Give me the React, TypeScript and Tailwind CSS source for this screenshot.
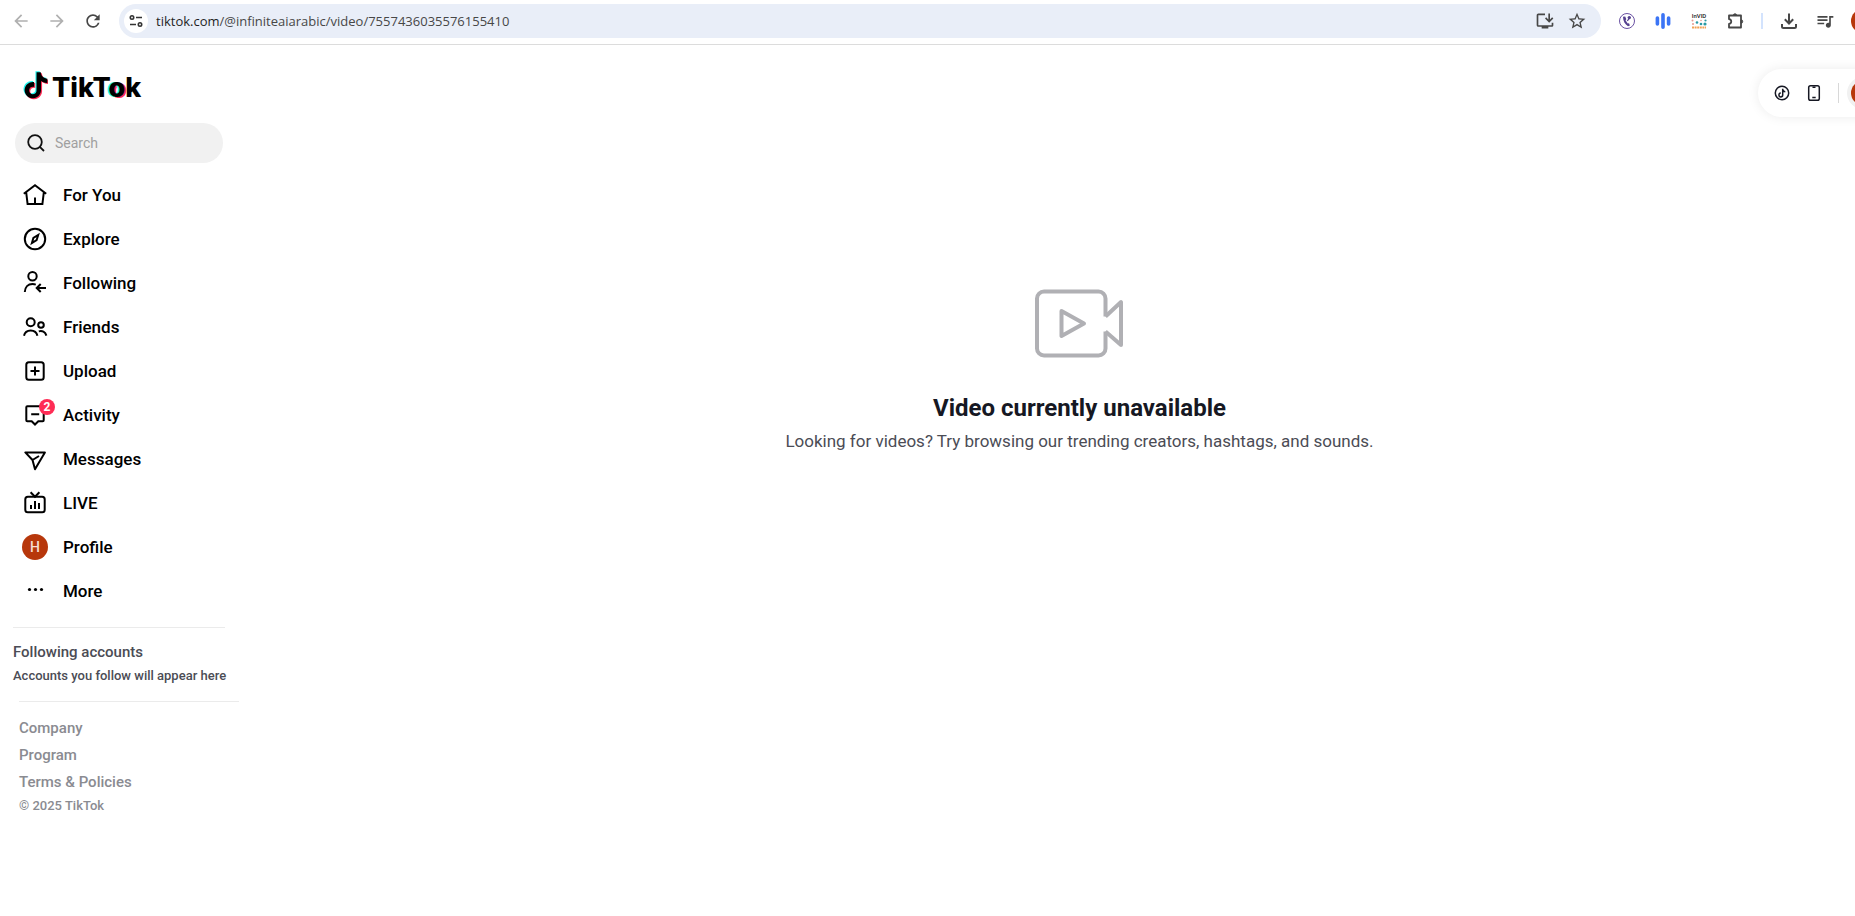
import type { ReactNode } from "react";
import {
  MdArrowBack,
  MdArrowForward,
  MdRefresh,
  MdStarBorder,
  MdOutlineInstallDesktop,
  MdQueueMusic,
} from "react-icons/md";

const NOTE =
  "M12.525.02c1.31-.02 2.61-.01 3.91-.02.08 1.53.63 3.09 1.75 4.17 1.12 1.11 2.7 1.62 4.24 1.79v4.03c-1.44-.05-2.89-.35-4.2-.97-.57-.26-1.1-.59-1.62-.93-.01 2.92.01 5.84-.02 8.75-.08 1.4-.54 2.79-1.35 3.94-1.31 1.92-3.58 3.17-5.91 3.21-1.43.08-2.86-.31-4.08-1.03-2.02-1.19-3.44-3.37-3.65-5.71-.02-.5-.03-1-.01-1.49.18-1.9 1.12-3.72 2.58-4.96 1.66-1.44 3.98-2.13 6.15-1.72.02 1.48-.04 2.96-.04 4.44-.99-.32-2.15-.23-3.02.37-.63.41-1.11 1.04-1.36 1.75-.21.51-.15 1.07-.14 1.61.24 1.64 1.82 3.02 3.5 2.87 1.12-.01 2.19-.66 2.77-1.61.19-.33.4-.67.41-1.06.1-1.79.06-3.57.07-5.36.01-4.03-.01-8.05.02-12.07z";

function NavIcon({ children }: { children: ReactNode }) {
  return (
    <svg viewBox="0 0 28 28" className="size-7" fill="none" stroke="currentColor" strokeWidth="2" aria-hidden="true">
      {children}
    </svg>
  );
}

type Item = { label: string; icon: ReactNode; badge?: number };

const items: Item[] = [
  {
    label: "For You",
    icon: (
      <NavIcon>
        <path d="M2.8 12.8 14 4.2l11.2 8.6M5.2 11.5 6.6 23h14.8l1.4-11.5M14 16.5V23" />
      </NavIcon>
    ),
  },
  {
    label: "Explore",
    icon: (
      <NavIcon>
        <circle cx="14" cy="14" r="10.2" />
        <path d="M17.2 10 15.6 15.2 10.9 18 12.4 12.8Z" />
      </NavIcon>
    ),
  },
  {
    label: "Following",
    icon: (
      <NavIcon>
        <circle cx="11.5" cy="7.2" r="4.2" />
        <path d="M3.8 23c.2-5 3.2-8 7.7-8 1.3 0 2.3.2 3.3.6M25 19h-8.5M19.7 15l-4 4 4 4" />
      </NavIcon>
    ),
  },
  {
    label: "Friends",
    icon: (
      <NavIcon>
        <circle cx="9.7" cy="9.3" r="4" />
        <circle cx="20" cy="12" r="2.8" />
        <path d="M3 22.8c.7-3.4 3.3-5.3 6.7-5.3s6 1.9 6.7 5.3M17.8 18.4c3.3-1.2 6.5.5 7.6 4.2" />
      </NavIcon>
    ),
  },
  {
    label: "Upload",
    icon: (
      <NavIcon>
        <rect x="5.3" y="5.3" width="17.4" height="17.4" rx="2.5" />
        <path d="M14 9.5v9M9.5 14h9" />
      </NavIcon>
    ),
  },
  {
    label: "Activity",
    badge: 2,
    icon: (
      <NavIcon>
        <path d="M6.3 5.2h15.4a1 1 0 0 1 1 1v13a1 1 0 0 1-1 1h-4.4L14 23.5l-3.3-3.3H6.3a1 1 0 0 1-1-1v-13a1 1 0 0 1 1-1ZM10.2 13.2h8" />
      </NavIcon>
    ),
  },
  {
    label: "Messages",
    icon: (
      <NavIcon>
        <path d="M4.3 7.4h19.6L14 24.2l-2.500-9.200ZM11.500 15l6.500-4" strokeLinejoin="round" />
      </NavIcon>
    ),
  },
  {
    label: "LIVE",
    icon: (
      <NavIcon>
        <rect x="4.3" y="7.7" width="19.4" height="15.6" rx="2.5" />
        <path d="M9.6 3.2 14 7.7l4.4-4.5M10 16v4M14 12v8M18 14v6" />
      </NavIcon>
    ),
  },
  {
    label: "Profile",
    icon: (
      <span className="flex size-[26px] items-center justify-center rounded-full bg-[#b7370b] text-sm text-[#f6ddd3]">
        H
      </span>
    ),
  },
  {
    label: "More",
    icon: (
      <NavIcon>
        <g fill="currentColor" stroke="none">
          <circle cx="8.5" cy="12.5" r="1.6" />
          <circle cx="14.5" cy="12.5" r="1.6" />
          <circle cx="20.5" cy="12.5" r="1.6" />
        </g>
      </NavIcon>
    ),
  },
];

function BrowserBar() {
  return (
    <header className="flex h-[45px] items-start border-b border-[#dcdcdc] bg-white pt-1 text-[#474747]">
      <div className="flex h-[34px] w-[119px] shrink-0 items-center gap-4 pl-[11px]">
        <button aria-label="Back" className="text-[#b0b0b0]">
          <MdArrowBack className="size-5" />
        </button>
        <button aria-label="Forward" className="text-[#b0b0b0]">
          <MdArrowForward className="size-5" />
        </button>
        <button aria-label="Reload">
          <MdRefresh className="size-5" />
        </button>
      </div>
      <div className="flex h-[34px] min-w-0 flex-1 items-center rounded-full bg-[#e9eef8] pr-[14px] pl-[5px]">
        <button aria-label="Site information" className="flex size-6 shrink-0 items-center justify-center rounded-full bg-white">
          <svg viewBox="0 0 16 16" className="size-4" fill="none" stroke="#333" strokeWidth="1.6">
            <circle cx="4" cy="4.5" r="1.7" />
            <path d="M8 4.5h6M2 11.5h6" />
            <circle cx="12" cy="11.5" r="1.7" />
          </svg>
        </button>
        <p className="flex-1 truncate pl-2 font-['Open_Sans',sans-serif] text-[13px] leading-5 text-[#474747]">
          <span className="text-[#1f1f1f]">tiktok.com</span>/@infiniteaiarabic/video/7557436035576155410
        </p>
        <div className="flex items-center gap-3">
          <button aria-label="Install app">
            <MdOutlineInstallDesktop className="size-5" />
          </button>
          <button aria-label="Bookmark">
            <MdStarBorder className="size-5" />
          </button>
        </div>
      </div>
      <div className="flex h-[34px] w-[318px] shrink-0 items-center pl-4">
        <div className="flex items-center gap-4">
          <button aria-label="Call extension">
            <svg viewBox="0 0 20 20" className="size-5" fill="none">
              <circle cx="10" cy="10" r="7.5" stroke="#6a51a3" />
              <path d="M6 5.8 8.2 5.6 9.3 8.3 8.5 9.2 10.7 12.5 12 12.3 12.9 14.5 11 15.3C8 13.5 6 10 6 5.8Z" fill="#54408f" />
              <path d="m10.3 9.8 2.2-2.6" stroke="#54408f" strokeWidth="1.2" />
              <circle cx="12.3" cy="6.6" r="1.7" fill="#54408f" />
            </svg>
          </button>
          <button aria-label="Audio extension">
            <svg viewBox="0 0 20 20" className="size-5" stroke="#3b74f5" strokeWidth="3.6" strokeLinecap="round">
              <path d="M4.4 7v6M10 3.8v12.4M15.6 7v6" />
            </svg>
          </button>
          <button aria-label="InVID extension" className="flex size-5 flex-col items-center justify-center">
            <span className="text-[6px] leading-[6px] font-medium text-[#222]">InVID</span>
            <svg viewBox="0 0 16 7" className="h-[7px] w-4">
              <g fill="#2a9ba5">
                <circle cx="6" cy="3.5" r="1.3" />
                <circle cx="10" cy="5" r="1.3" />
                <circle cx="14.5" cy="1.5" r="1.1" />
                <circle cx="14" cy="5" r="1.6" />
              </g>
              <g fill="#e79a8f">
                <circle cx="1.5" cy="1.5" r="1" />
                <circle cx="2" cy="5" r="1" />
                <circle cx="10" cy="1.5" r=".8" />
              </g>
            </svg>
            <svg viewBox="0 0 16 3" className="h-[3px] w-4" stroke="#f2a154" strokeWidth="2" strokeDasharray="2 .6">
              <path d="M1 1.5h14" />
            </svg>
          </button>
          <button aria-label="Extensions">
            <svg viewBox="0 0 20 20" className="size-5" fill="none" stroke="currentColor" strokeWidth="1.8" strokeLinejoin="round">
              <path d="M4 4.5h12v12H4v-3.6c3-.3 3-4.5 0-4.8Z" />
              <path d="M8.300 4.500a1.700 1.700 0 0 1 3.400 0ZM16 8.800a1.700 1.700 0 0 1 0 3.400Z" fill="currentColor" strokeWidth="1" />
            </svg>
          </button>
        </div>
        <div className="ml-4 h-4 w-[2px] bg-[#d3e3fd]" />
        <div className="ml-4 flex items-center gap-4">
          <button aria-label="Downloads">
            <svg viewBox="0 0 20 20" className="size-5" fill="none" stroke="currentColor" strokeWidth="2">
              <path d="M10 2.5v9.5M5.8 8.3 10 12.5l4.2-4.2M3 13v2.5A1.5 1.5 0 0 0 4.5 17h11a1.5 1.5 0 0 0 1.5-1.5V13" />
            </svg>
          </button>
          <button aria-label="Media controls">
            <MdQueueMusic className="size-5" />
          </button>
          <button aria-label="Browser profile" className="size-6 rounded-full bg-[#b7370b]" />
        </div>
      </div>
    </header>
  );
}

function Logo() {
  return (
    <a href="#" aria-label="TikTok" className="ml-[7px] flex h-[30px] items-center gap-1 text-black">
      <svg viewBox="0 0 26 30" className="h-[30px] w-[26px]">
        <path d={NOTE} transform="translate(-.2 .2) scale(1.09)" fill="#25f4ee" />
        <path d={NOTE} transform="translate(2 2.2) scale(1.09)" fill="#fe2c55" />
        <path d={NOTE} transform="translate(.9 1.2) scale(1.09)" />
      </svg>
      <span className="pt-1 font-[Inter,sans-serif] text-[27px] leading-7 font-extrabold">
        <span className="relative z-10">TikT</span>
        <span className="[text-shadow:-2px_0_0_#25f4ee,2px_1px_0_#fe2c55]">o</span>
        <span className="relative z-10">k</span>
      </span>
    </a>
  );
}

function Sidebar() {
  return (
    <aside className="w-60 shrink-0 pt-[26px]">
      <div className="pl-[15px]">
        <Logo />
        <label className="mt-[22px] flex h-10 w-[208px] items-center gap-[10px] rounded-full bg-[#f1f1f1] pl-3">
          <svg viewBox="0 0 18 18" className="size-[18px] shrink-0" fill="none" stroke="#111" strokeWidth="1.8">
            <circle cx="8" cy="8" r="6.8" />
            <path d="m12.8 12.8 4.2 4.2" />
          </svg>
          <input
            type="search"
            aria-label="Search"
            placeholder="Search"
            className="w-full min-w-0 bg-transparent text-sm outline-none placeholder:text-[#a0a0a0]"
          />
        </label>
      </div>
      <nav className="mt-[10px] pl-[21px]">
        <ul>
          {items.map((item) => (
            <li key={item.label}>
              <a href="#" className="flex h-11 items-center gap-[14px] text-[17px] font-medium text-black">
                <span className="relative flex size-7 items-center justify-center">
                  {item.icon}
                  {item.badge && (
                    <span className="absolute -top-[2px] -right-[6px] flex size-4 items-center justify-center rounded-full bg-[#fe2c55] text-xs font-bold text-white">
                      {item.badge}
                    </span>
                  )}
                </span>
                <span className="pt-[2px]">{item.label}</span>
              </a>
            </li>
          ))}
        </ul>
      </nav>
      <section className="mt-[14px] ml-[13px] w-[212px] border-t border-[#ebebeb] pt-3 font-medium whitespace-nowrap text-[#4b4c55]">
        <h2 className="text-[15px] leading-6">Following accounts</h2>
        <p className="text-[13px] leading-6">Accounts you follow will appear here</p>
      </section>
      <footer className="mt-[13px] ml-[19px] w-[220px] border-t border-[#ebebeb] pt-[13px] font-medium text-[#8a8b91]">
        <ul className="text-[15px] leading-[27px]">
          <li>
            <a href="#">Company</a>
          </li>
          <li>
            <a href="#">Program</a>
          </li>
          <li>
            <a href="#">Terms &amp; Policies</a>
          </li>
        </ul>
        <p className="text-[13px] leading-5">© 2025 TikTok</p>
      </footer>
    </aside>
  );
}

function Toolbar() {
  return (
    <div className="mt-6 flex h-12 w-[161px] items-center self-end rounded-l-full bg-white pl-[14px] text-[#161823] shadow-[0_0_12px_rgba(0,0,0,0.08)]">
      <button aria-label="Get coins">
        <svg viewBox="0 0 20 20" className="size-5" fill="none" stroke="currentColor" strokeWidth="1.5">
          <circle cx="10" cy="10" r="6.7" />
          <path d="M10.7 5.8v6.2a1.9 1.9 0 1 1-1.9-1.9M10.7 6.5c.3 1.400 1.300 2.200 2.600 2.300" />
        </svg>
      </button>
      <button aria-label="Get app" className="ml-3">
        <svg viewBox="0 0 20 20" className="size-5" fill="none" stroke="currentColor" strokeWidth="1.5">
          <rect x="4.7" y="2.7" width="10.6" height="14.6" rx="1.8" />
          <path d="M8.3 14.5h3.4M8.5 4.2h3" />
        </svg>
      </button>
      <div className="ml-[14px] h-5 w-px bg-[#d8d8d8]" />
      <button aria-label="Account" className="ml-2 flex size-8 items-center justify-center rounded-full bg-[#f1f1f1]">
        <span className="size-6 rounded-full bg-[#b7370b]" />
      </button>
    </div>
  );
}

export default function App() {
  return (
    <div className="min-h-screen overflow-x-hidden bg-white font-[Roboto,sans-serif]">
      <div className="-mr-16">
        <BrowserBar />
        <div className="flex">
          <Sidebar />
          <main className="flex flex-1 flex-col items-center">
            <Toolbar />
            <svg viewBox="0 0 90 70" className="mt-[171px] h-[70px] w-[90px]" fill="none" stroke="#b0b0b4" strokeWidth="4" strokeLinejoin="round">
              <path d="M70.5 28.500V10.500a7 7 0 0 0-7-7H9a7 7 0 0 0-7 7v50a7 7 0 0 0 7 7h54.500a7 7 0 0 0 7-7V43.500" />
              <path d="M70.5 28.500 86 14v43L70.500 43.500M26.500 23 49 35.500 26.500 48Z" />
            </svg>
            <h1 className="mt-[34px] text-2xl leading-8 font-bold text-[#161823]">Video currently unavailable</h1>
            <p className="mt-[3px] text-[17px] leading-7 text-[#4b4c55]">
              Looking for videos? Try browsing our trending creators, hashtags, and sounds.
            </p>
          </main>
        </div>
      </div>
    </div>
  );
}
